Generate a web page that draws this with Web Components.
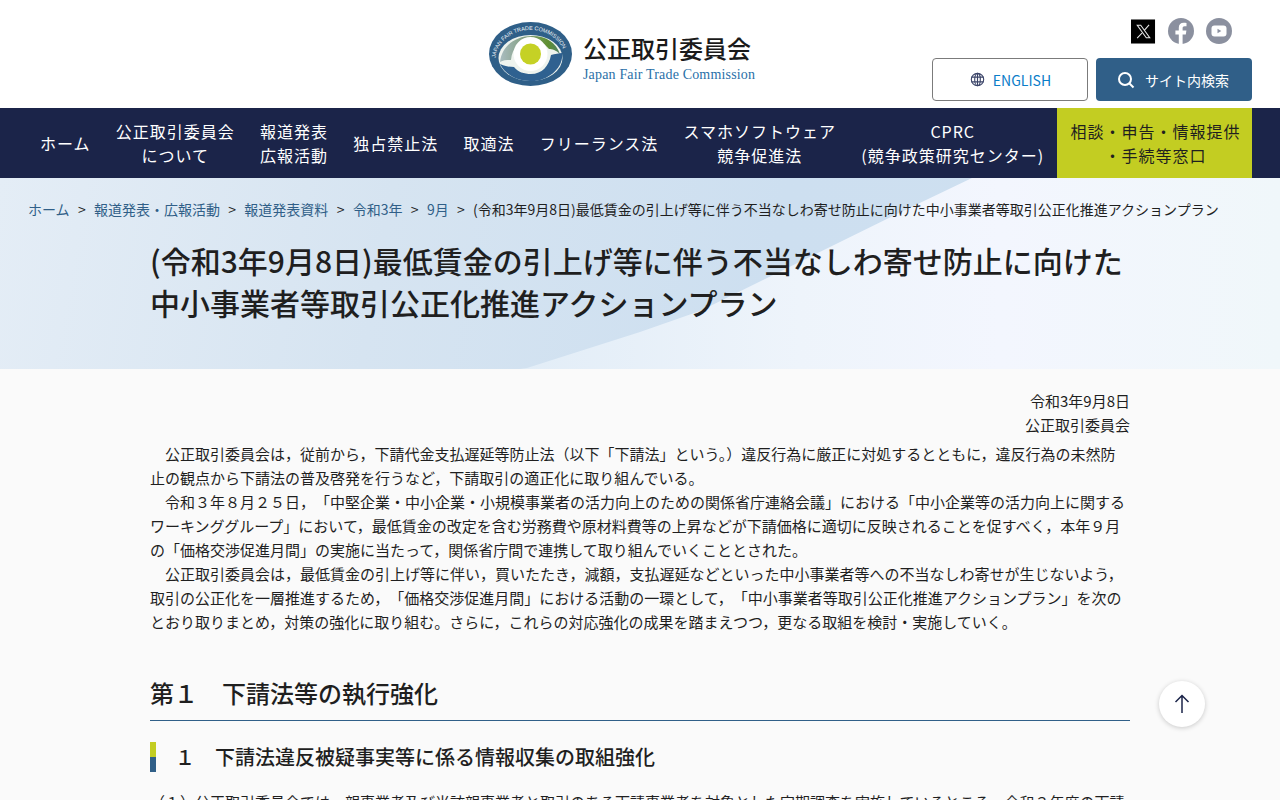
<!DOCTYPE html>
<html lang="ja">
<head>
<meta charset="utf-8">
<title>公正取引委員会</title>
<style>
  html, body { margin: 0; background: #fafafa; }
  body {
    font-family: "Noto Sans CJK JP", "Noto Sans", sans-serif;
    color: #1f1f1f;
  }
  /* no trimming between a full-width comma and an opening bracket */
  .full { text-spacing-trim: space-all; }
</style>
</head>
<body>
<site-header></site-header>
<global-nav>
  <nav-item>ホーム</nav-item>
  <nav-item>公正取引委員会<br>について</nav-item>
  <nav-item>報道発表<br>広報活動</nav-item>
  <nav-item>独占禁止法</nav-item>
  <nav-item>取適法</nav-item>
  <nav-item>フリーランス法</nav-item>
  <nav-item>スマホソフトウェア<br>競争促進法</nav-item>
  <nav-item>CPRC<br>(競争政策研究センター)</nav-item>
  <nav-item accent>相談・申告・情報提供<br>・手続等窓口</nav-item>
</global-nav>
<page-hero>
  <bread-crumbs slot="crumbs">
    <a>ホーム</a><a>報道発表・広報活動</a><a>報道発表資料</a><a>令和3年</a><a>9月</a><span>(令和3年9月8日)最低賃金の引上げ等に伴う不当なしわ寄せ防止に向けた中小事業者等取引公正化推進アクションプラン</span>
  </bread-crumbs>
  (令和3年9月8日)最低賃金の引上げ等に伴う不当なしわ寄せ防止に向けた<br>中小事業者等取引公正化推進アクションプラン
</page-hero>
<article-body>
  <div slot="date">令和3年9月8日<br>公正取引委員会</div>
  <p>公正取引委員会は，従前から，下請代金支払遅延等防止法（以下「下請法」という。）違反行為に厳正に対処するとともに，違反行為の未然防止の観点から下請法の普及啓発を行うなど，下請取引の適正化に取り組んでいる。</p>
  <p class="full">令和３年８月２５日，「中堅企業・中小企業・小規模事業者の活力向上のための関係省庁連絡会議」における「中小企業等の活力向上に関するワーキンググループ」において，最低賃金の改定を含む労務費や原材料費等の上昇などが下請価格に適切に反映されることを促すべく，本年９月の「価格交渉促進月間」の実施に当たって，関係省庁間で連携して取り組んでいくこととされた。</p>
  <p class="full">公正取引委員会は，最低賃金の引上げ等に伴い，買いたたき，減額，支払遅延などといった中小事業者等への不当なしわ寄せが生じないよう，取引の公正化を一層推進するため，「価格交渉促進月間」における活動の一環として，「中小事業者等取引公正化推進アクションプラン」を次のとおり取りまとめ，対策の強化に取り組む。さらに，これらの対応強化の成果を踏まえつつ，更なる取組を検討・実施していく。</p>
  <section-title>第１　下請法等の執行強化</section-title>
  <sub-title>１　下請法違反被疑事実等に係る情報収集の取組強化</sub-title>
  <p class="item" style="text-indent:0">（１）公正取引委員会では，親事業者及び当該親事業者と取引のある下請事業者を対象とした定期調査を実施しているところ，令和３年度の下請</p>
</article-body>
<back-to-top></back-to-top>

<script>
class SiteHeader extends HTMLElement {
  constructor() {
    super();
    this.shadow = this.attachShadow({ mode: 'open' });
    this.shadow.innerHTML = `
      <style>
        :host { display: block; background: #fff; height: 108px; position: relative; }
        .wrap { height: 100%; display: flex; justify-content: flex-end; padding-right: 28px; box-sizing: border-box; }
        .brand { position: absolute; left: 489px; top: 22px; display: flex; gap: 11px; align-items: center; }
        .label { padding-top: 7px; }
        .name { font-size: 24px; font-weight: 500; line-height: 32px; color: #1a1a1a; }
        .en { font: 14px/18px "Liberation Serif", serif; color: #2a70a8; letter-spacing: .012em; margin-top: 2px; }
        .tools { display: flex; flex-direction: column; align-items: flex-end; padding-top: 18px; gap: 14px; }
        .sns { display: flex; gap: 12px; padding-right: 20px; align-items: center; }
        .sns svg { display: block; width: 26px; height: 26px; }
        .btns { display: flex; gap: 8px; }
        .btn { box-sizing: border-box; width: 156px; height: 43px; border-radius: 4px; display: flex; align-items: center; justify-content: center; font-size: 14px; }
        .en-btn { background: #fff; border: 1px solid #7b7b7b; color: #0a7dc8; gap: 8px; padding-left: 1px; }
        .search { background: #305f88; color: #fff; gap: 10px; padding-right: 2px; }
      </style>
      <div class="wrap">
        <div class="brand">
          <svg width="83" height="64" viewBox="0 0 83 64">
            <defs>
              <path id="arc" d="M6.500 38 A35 30 0 0 1 76.500 38"/>
              <linearGradient id="sw" x1="0" y1=".5" x2="1" y2=".5">
                <stop offset="0" stop-color="#a9bcc0"/>
                <stop offset=".45" stop-color="#7f9c7a"/>
                <stop offset=".8" stop-color="#5f8f2f"/>
                <stop offset="1" stop-color="#4f8068"/>
              </linearGradient>
            </defs>
            <ellipse cx="41.500" cy="32" rx="41.500" ry="32" fill="#2f5f88"/>
            <ellipse cx="41.500" cy="36" rx="32" ry="23" fill="#eef3ee"/>
            <path d="M11 40 C13 24 26 14 43 14 C58 14 67 21 71 32 C67 28 63 27 60 27 C55 21 49 18 42 18 C31 18 23 26 22 38 C18 38 14 38 11 40Z" fill="url(#sw)"/>
            <path d="M73 31 C75 46 58 60 41 59 C27 59 16 52 11 42 C18 45 21 45 25 45 C29 50 35 52 42 52 C53 52 60 44 62 33 C66 32 70 31 73 31Z" fill="#2f6190"/>
            <circle cx="41.500" cy="32" r="17" fill="#fff"/>
            <circle cx="41.500" cy="32" r="10.500" fill="#c5d125"/>
            <text font-family="Liberation Sans, sans-serif" font-size="5.500" fill="#f2f5f8"><textPath href="#arc" startOffset="2">JAPAN FAIR TRADE COMMISSION</textPath></text>
          </svg>
          <div class="label">
            <div class="name">公正取引委員会</div>
            <div class="en">Japan Fair Trade Commission</div>
          </div>
        </div>
        <div class="tools">
          <div class="sns">
            <svg viewBox="0 0 26 26" style="width:25px;height:25px"><rect width="25" height="25" y=".5" fill="#000"/><path d="M6.500 6.500h3.600l9.400 13h-3.600zM18.800 6.200l-5 5.700M11.400 14.600l-5 5.200" fill="none" stroke="#e8e8e8" stroke-width="1.100"/></svg>
            <svg viewBox="0 0 26 26"><circle cx="13" cy="13" r="13" fill="#8b909f"/><path d="M14.600 26V16.400h3.200l.6-3.800h-3.800v-2.300c0-1.100.5-2 2.100-2h1.800V5.100c-.8-.1-1.800-.3-2.800-.3-3 0-4.900 1.800-4.900 5v2.800H7.400v3.800h3.400V26z" fill="#fff"/></svg>
            <svg viewBox="0 0 26 26"><circle cx="13" cy="13" r="13" fill="#8b909f"/><rect x="5.500" y="7.500" width="15" height="11" rx="3" fill="#fff"/><path d="M11.500 10.700v4.600l3.800-2.300z" fill="#8b909f"/></svg>
          </div>
          <div class="btns">
            <div class="btn en-btn">
              <svg width="15" height="15" viewBox="0 0 16 16" fill="none" stroke="#3b4468" stroke-width="1.200"><circle cx="8" cy="8" r="6.600"/><ellipse cx="8" cy="8" rx="3" ry="6.600"/><path d="M1.500 5.500h13M1.500 10.500h13M8 1.400v13.200"/></svg>
              <span>ENGLISH</span>
            </div>
            <div class="btn search">
              <svg width="18" height="18" viewBox="0 0 18 18" fill="none" stroke="#fff" stroke-width="2"><circle cx="8" cy="8" r="6"/><path d="M12.500 12.500l4 4"/></svg>
              <span>サイト内検索</span>
            </div>
          </div>
        </div>
      </div>
    `;
  }
}

class GlobalNav extends HTMLElement {
  constructor() {
    super();
    this.shadow = this.attachShadow({ mode: 'open' });
    this.shadow.innerHTML = `
      <style>
        :host { display: flex; height: 70px; background: #1b2449; padding: 0 28px 0 27.4px; box-sizing: border-box; justify-content: space-between; }
      </style>
      <slot></slot>
    `;
  }
}

class NavItem extends HTMLElement {
  constructor() {
    super();
    this.shadow = this.attachShadow({ mode: 'open' });
    this.shadow.innerHTML = `
      <style>
        :host { display: flex; align-items: center; justify-content: center; text-align: center; color: #fff; font-size: 16px; line-height: 24px; letter-spacing: 1px; padding: 0 12.6px; white-space: nowrap; }
        :host([accent]) { background: #c3cd22; color: #1f1f1f; padding: 0 11.6px 0 13.6px; }
      </style>
      <div><slot></slot></div>
    `;
  }
}

class PageHero extends HTMLElement {
  constructor() {
    super();
    this.shadow = this.attachShadow({ mode: 'open' });
    this.shadow.innerHTML = `
      <style>
        :host { display: block; position: relative; height: 191px; overflow: hidden; background: linear-gradient(100deg, #e4edf6 0%, #d6e4f1 30%, #cddff0 60%, #cfe0f0 100%); }
        /* lighter wedge on the right of the banner */
        .light { position: absolute; inset: 0; background: linear-gradient(90deg, #e2edf7 520px, #eef4fb 800px, #f3f6fe 1000px, #f0f7fa 1280px); clip-path: polygon(972px 0, 100% 0, 100% 100%, 520px 100%, 527px 190px, 640px 154px, 700px 133px, 901px 34px); }
        .inner { position: relative; padding: 20px 28px 0; }
        h1 { margin: 19px 122px 0; font-size: 30px; font-weight: 500; line-height: 42px; color: #1f1f1f; }
      </style>
      <div class="light"></div>
      <div class="inner">
        <slot name="crumbs"></slot>
        <h1><slot></slot></h1>
      </div>
    `;
  }
}

class BreadCrumbs extends HTMLElement {
  constructor() {
    super();
    this.shadow = this.attachShadow({ mode: 'open' });
    this.shadow.innerHTML = `
      <style>
        :host { display: block; font-size: 14px; line-height: 22px; color: #1f1f1f; white-space: nowrap; }
        ::slotted(a) { color: #305f88; }
        ::slotted(a)::after { content: ">"; color: #1f1f1f; margin: 0 8.3px; }
      </style>
      <slot></slot>
    `;
  }
}

class ArticleBody extends HTMLElement {
  constructor() {
    super();
    this.shadow = this.attachShadow({ mode: 'open' });
    this.shadow.innerHTML = `
      <style>
        :host { display: block; width: 980px; margin: 0 auto; padding: 20px 0 0; font-size: 15px; line-height: 24px; color: #1f1f1f; }
        .date { text-align: right; margin-bottom: 5px; }
        ::slotted(p) { margin: 0; text-indent: 1em; }
      </style>
      <div class="date"><slot name="date"></slot></div>
      <slot></slot>
    `;
  }
}

class SectionTitle extends HTMLElement {
  constructor() {
    super();
    this.shadow = this.attachShadow({ mode: 'open' });
    this.shadow.innerHTML = `
      <style>
        :host { display: block; margin-top: 41px; padding-bottom: 9px; border-bottom: 1px solid #305f88; font-size: 24px; font-weight: 500; line-height: 36px; }
      </style>
      <slot></slot>
    `;
  }
}

class SubTitle extends HTMLElement {
  constructor() {
    super();
    this.shadow = this.attachShadow({ mode: 'open' });
    this.shadow.innerHTML = `
      <style>
        :host { display: flex; align-items: center; margin: 21px 0 18px; height: 30px; font-size: 20px; font-weight: 500; line-height: 30px; border-left: 6px solid; border-image: linear-gradient(#c3cd22 50%, #305f88 50%) 1; padding-left: 19px; }
      </style>
      <div><slot></slot></div>
    `;
  }
}

class BackToTop extends HTMLElement {
  constructor() {
    super();
    this.shadow = this.attachShadow({ mode: 'open' });
    this.shadow.innerHTML = `
      <style>
        :host { position: fixed; left: 1159px; top: 681px; width: 46px; height: 46px; border-radius: 50%; background: #fff; box-shadow: 0 1px 5px rgba(0,0,0,.2); display: flex; align-items: center; justify-content: center; }
      </style>
      <svg width="16" height="20" viewBox="0 0 16 20" fill="none" stroke="#1b2449" stroke-width="1.500"><path d="M8 19V1.500M1.500 8L8 1.500 14.500 8"/></svg>
    `;
  }
}

customElements.define('site-header', SiteHeader);
customElements.define('global-nav', GlobalNav);
customElements.define('nav-item', NavItem);
customElements.define('page-hero', PageHero);
customElements.define('bread-crumbs', BreadCrumbs);
customElements.define('article-body', ArticleBody);
customElements.define('section-title', SectionTitle);
customElements.define('sub-title', SubTitle);
customElements.define('back-to-top', BackToTop);
</script>
</body>
</html>
